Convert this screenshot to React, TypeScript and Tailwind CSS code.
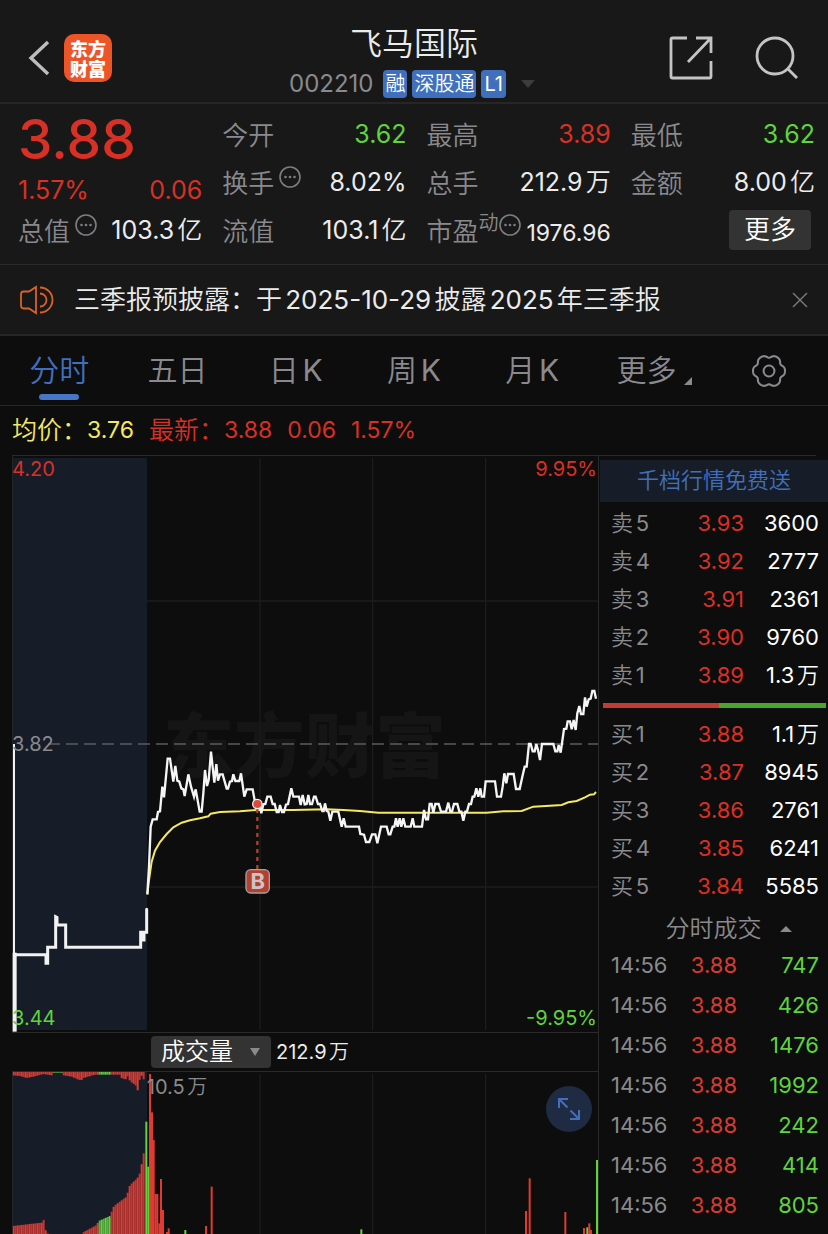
import React from "react"

const sells = [
  { level: "卖5", price: "3.93", volume: "3600" },
  { level: "卖4", price: "3.92", volume: "2777" },
  { level: "卖3", price: "3.91", volume: "2361" },
  { level: "卖2", price: "3.90", volume: "9760" },
  { level: "卖1", price: "3.89", volume: "1.3万" },
]

const buys = [
  { level: "买1", price: "3.88", volume: "1.1万" },
  { level: "买2", price: "3.87", volume: "8945" },
  { level: "买3", price: "3.86", volume: "2761" },
  { level: "买4", price: "3.85", volume: "6241" },
  { level: "买5", price: "3.84", volume: "5585" },
]

const trades = [
  { time: "14:56", price: "3.88", volume: "747" },
  { time: "14:56", price: "3.88", volume: "426" },
  { time: "14:56", price: "3.88", volume: "1476" },
  { time: "14:56", price: "3.88", volume: "1992" },
  { time: "14:56", price: "3.88", volume: "242" },
  { time: "14:56", price: "3.88", volume: "414" },
  { time: "14:56", price: "3.88", volume: "805" },
]

const tabs = ["分时", "五日", "日K", "周K", "月K"]

const pricePoints =
  "442,643 447,560 452,440 458,418 470,418 474,396 480,394 487,320 492,352 503,236 510,236 520,305 526,258 532,302 538,305 544,325 550,328 554,348 565,283 573,320 582,350 587,328 599,395 605,395 610,340 615,270 621,318 626,300 633,215 643,308 649,252 654,302 660,283 668,283 680,326 684,326 690,305 696,303 700,283 706,303 718,303 723,280 733,350 740,328 758,328 766,372 772,372 780,378 784,400 790,373 796,372 802,350 812,350 818,372 824,372 830,396 836,396 840,375 846,396 852,396 858,374 864,372 874,325 880,350 897,350 902,375 908,345 914,373 920,372 925,345 930,372 936,372 942,350 947,350 954,372 960,372 967,393 971,393 975,370 980,393 985,395 991,422 997,395 1015,395 1025,440 1031,415 1037,440 1077,440 1081,462 1092,464 1098,486 1108,486 1116,463 1126,463 1132,490 1143,440 1160,440 1166,463 1171,463 1178,440 1183,440 1188,415 1193,440 1199,415 1204,440 1210,415 1216,440 1232,440 1238,415 1243,440 1266,440 1272,390 1278,418 1284,418 1289,372 1295,372 1300,398 1306,372 1316,372 1323,395 1338,395 1345,368 1351,395 1356,395 1362,372 1372,372 1378,395 1384,395 1390,422 1396,395 1401,395 1407,372 1413,372 1418,350 1423,350 1429,325 1435,350 1441,325 1445,350 1452,350 1457,304 1485,304 1491,350 1503,350 1508,320 1513,280 1519,310 1524,282 1541,282 1548,327 1559,327 1567,290 1574,260 1580,260 1587,192 1592,192 1598,214 1604,214 1609,192 1614,210 1620,240 1626,192 1660,192 1666,214 1672,214 1676,195 1682,218 1692,147 1699,146 1703,124 1710,124 1715,148 1721,120 1727,150 1732,100 1738,78 1743,102 1750,102 1755,52 1760,80 1766,58 1772,56 1777,33 1783,33 1788,56"

const averagePoints =
  "442,643 447,600 455,545 465,512 480,486 500,462 520,442 545,428 570,421 600,415 625,409 632,401 660,396 720,394 772,390 880,390 980,388 1030,390 1080,393 1135,398 1460,398 1510,394 1565,393 1600,380 1650,377 1685,375 1705,367 1730,363 1755,352 1770,344 1782,343 1788,336"

const auctionPoints =
  "45,824 138,824 138,850 143,850 143,802 167,802 167,710 171,712 171,735 197,735 197,802 422,802 422,757 427,757 427,780 432,780 432,757 440,757 440,688"

const RED = "#de3b32"
const GREEN = "#5fd43c"

// outline of the auction volume, [x, y] corners joined by straight lines
const auctionTop = [
  [38, 136], [60, 138], [80, 144], [100, 140], [130, 132], [155, 136], [160, 136], [161, 128], [190, 128],
  [191, 136], [215, 140], [243, 152], [250, 144], [285, 134], [360, 134], [366, 146], [380, 148], [384, 136],
  [390, 154], [405, 164], [410, 170], [415, 188], [420, 140], [428, 136], [433, 156], [438, 136], [444, 136],
]
const auctionBottom = [
  [38, 588], [125, 578], [133, 567], [138, 609], [150, 612], [246, 612], [248, 608], [290, 585], [296, 573],
  [330, 558], [335, 545], [342, 528], [380, 500], [385, 480], [390, 465], [412, 445], [422, 425], [428, 380],
  [434, 360],
]

const tradeBars = [
  [439, 275, GREEN], [445, 410, GREEN], [450, 132, RED], [456, 247, RED], [461, 330, RED], [467, 492, RED],
  [472, 492, RED], [478, 580, RED], [483, 447, RED], [489, 540, RED], [501, 606, RED], [506, 595, RED],
  [556, 600, GREEN], [618, 588, RED], [635, 470, RED], [1084, 598, GREEN], [1578, 543, RED], [1589, 445, RED],
  [1696, 546, RED], [1752, 594, RED], [1762, 592, GREEN], [1768, 580, RED], [1773, 600, RED], [1791, 390, GREEN],
] as [number, number, string][]

const levelAt = (outline: number[][], x: number) => {
  for (let i = 1; i < outline.length; i++) {
    const [x0, y0] = outline[i - 1]
    const [x1, y1] = outline[i]
    if (x <= x1) return y0 + ((y1 - y0) * (x - x0)) / (x1 - x0)
  }
  return outline[outline.length - 1][1]
}

const auctionXs = Array.from({ length: 66 }, (_, i) => 41 + i * 6)
const isFalling = (x: number) => x > 294 && x < 333

// six wide teeth with narrow notches between them
const gearPath =
  Array.from({ length: 72 }, (_, i) => {
    const a = (i * Math.PI) / 36
    const r = 47 - 8 * ((1 - Math.cos(6 * a)) / 2) ** 2
    return `${i ? "L" : "M"}${(50 + r * Math.cos(a)).toFixed(1)} ${(50 + r * Math.sin(a)).toFixed(1)}`
  }).join("") + "Z"

const MoreDots = () => (
  <svg viewBox="0 0 22 22" className="h-[22px] w-[22px] shrink-0" fill="none">
    <circle cx="11" cy="11" r="10" stroke="#7d7d81" strokeWidth="1.6" />
    <circle cx="6.5" cy="11" r="1.3" fill="#7d7d81" />
    <circle cx="11" cy="11" r="1.3" fill="#7d7d81" />
    <circle cx="15.5" cy="11" r="1.3" fill="#7d7d81" />
  </svg>
)

type StatProps = { label: string; value: string; color?: string; dots?: boolean }

const Stat = ({ label, value, color = "text-[#ececec]", dots }: StatProps) => (
  <div className="flex h-12 items-center justify-between">
    <dt className="flex items-center gap-[5px] text-[26px] text-[#8a8a8e]">
      {label}
      {dots && <span className="mb-3"><MoreDots /></span>}
    </dt>
    <dd className={color}>{value}</dd>
  </div>
)

const Header = () => (
  <header className="grid h-[104px] grid-cols-[1fr_auto_1fr] items-center border-b-2 border-[#262626] bg-[#181818] pt-[14px]">
    <div className="flex items-center gap-3 pl-7">
      <button aria-label="返回">
        <svg viewBox="0 0 24 38" className="h-[38px] w-6" fill="none" stroke="#bdbdbd" strokeWidth="3.4">
          <path d="M20 3 L3 19 L20 35" />
        </svg>
      </button>
      <button className="flex h-12 w-12 flex-col items-center justify-center rounded-[10px] bg-[#ed5529] font-['Noto_Sans_CJK_SC',sans-serif] text-[18px] leading-5 font-black text-white">
        <span>东方</span>
        <span>财富</span>
      </button>
    </div>
    <div className="flex flex-col items-center pt-2">
      <h1 className="text-[32px] leading-[44px] text-[#ececec]">飞马国际</h1>
      <div className="flex h-9 items-center gap-[5px] pr-1 text-[20px] leading-7 text-white">
        <span className="mr-[5px] text-[24px] text-[#8a8a8e]">002210</span>
        <span className="rounded bg-[#4070bd] px-[2px]">融</span>
        <span className="rounded bg-[#4070bd] px-[2px]">深股通</span>
        <span className="rounded bg-[#4070bd] px-[3px]">L1</span>
        <button aria-label="切换股票" className="ml-[10px]">
          <svg viewBox="0 0 14 8" className="h-2 w-[14px]"><path d="M0 0H14L7 8Z" fill="#3c3c3c" /></svg>
        </button>
      </div>
    </div>
    <div className="flex items-center justify-end gap-10 pr-7">
      <button aria-label="分享">
        <svg viewBox="0 0 46 46" className="h-[46px] w-[46px]" fill="none" stroke="#c4c4c4" strokeWidth="2.8">
          <path d="M19 3H4.500Q3 3 3 4.500V41.500Q3 43 4.500 43H41.500Q43 43 43 41.500V26" />
          <path d="M28 3H43V18M43 3L20 27" />
        </svg>
      </button>
      <button aria-label="搜索">
        <svg viewBox="0 0 46 46" className="h-[46px] w-[46px]" fill="none" stroke="#c4c4c4" strokeWidth="2.8">
          <circle cx="21" cy="21" r="18" />
          <path d="M34 34L43 43" />
        </svg>
      </button>
    </div>
  </header>
)

const Quote = () => (
  <section className="grid grid-cols-4 gap-5 border-b border-[#2a2a2a] bg-[#181818] pt-[7px] pr-[13px] pb-[9px] pl-[18px] text-[25px] whitespace-nowrap [text-autospace:normal]">
    <div>
      <div className="flex h-24 flex-col justify-between text-[#d93025]">
        <strong className="text-[55px] leading-[56px] font-medium">3.88</strong>
        <div className="flex justify-between leading-[34px]">
          <span>1.57%</span>
          <span>0.06</span>
        </div>
      </div>
      <dl><Stat label="总值" value="103.3亿" dots /></dl>
    </div>
    <dl>
      <Stat label="今开" value="3.62" color="text-[#5fd43c]" />
      <Stat label="换手" value="8.02%" dots />
      <Stat label="流值" value="103.1亿" />
    </dl>
    <dl>
      <Stat label="最高" value="3.89" color="text-[#d93025]" />
      <Stat label="总手" value="212.9万" />
      <div className="flex h-12 items-center justify-between">
        <dt className="flex items-center text-[26px] text-[#8a8a8e]">
          市盈
          <span className="mb-4 text-[20px] leading-6">动</span>
          <span className="mb-3"><MoreDots /></span>
        </dt>
        <dd className="pt-1 text-[23px] text-[#ececec]">1976.96</dd>
      </div>
    </dl>
    <div>
      <dl>
        <Stat label="最低" value="3.62" color="text-[#5fd43c]" />
        <Stat label="金额" value="8.00亿" />
      </dl>
      <div className="flex justify-end pt-[3px] pr-1">
        <button className="h-10 w-[82px] rounded bg-[#333333] text-[26px] leading-10 text-white">更多</button>
      </div>
    </div>
  </section>
)

const Notice = () => (
  <section className="flex h-[71px] items-center border-b-2 border-[#262626] bg-[#181818] pr-5 pl-5">
    <svg viewBox="0 0 34 30" className="h-[30px] w-[34px]" fill="none" stroke="#d9622b" strokeWidth="1.8">
      <path d="M16 2V28L9 23.500H3.500Q1 23.500 1 20.500V9.500Q1 6.500 3.500 6.500H9Z" />
      <path d="M20 8.500A6.500 6.500 0 0 1 20 21.500" />
      <path d="M20 2.500A12.500 12.500 0 0 1 20 27.500" />
    </svg>
    <p className="flex-1 pl-5 text-[26px] whitespace-nowrap text-[#ececec] [text-autospace:normal]">
      三季报预披露：于2025-10-29披露2025年三季报
    </p>
    <button aria-label="关闭">
      <svg viewBox="0 0 16 16" className="h-4 w-4" stroke="#7d7d81" strokeWidth="1.4"><path d="M1 1L15 15M15 1L1 15" /></svg>
    </button>
  </section>
)

const Tabs = () => (
  <nav className="grid h-[70px] grid-cols-7 border-b border-[#262626] text-[30px] text-[#8a8a8e] [text-autospace:normal]">
    {tabs.map((tab, i) => (
      <button key={tab} className={`relative ${i === 0 ? "text-[#4070bd]" : ""}`}>
        {tab}
        {i === 0 && <span className="absolute bottom-[5px] left-1/2 h-[6px] w-10 -translate-x-1/2 rounded-full bg-[#4575c4]" />}
      </button>
    ))}
    <button className="relative pr-2">
      更多
      <svg viewBox="0 0 8 8" className="absolute right-[18px] bottom-5 h-2 w-2"><path d="M8 0V8H0Z" fill="#8a8a8e" /></svg>
    </button>
    <button aria-label="设置" className="flex items-center justify-center">
      <svg viewBox="0 0 100 100" className="h-[34px] w-[34px]" fill="none" stroke="#8a8a8e" strokeWidth="6" strokeLinejoin="round">
        <path d={gearPath} />
        <circle cx="50" cy="50" r="16" />
      </svg>
    </button>
  </nav>
)

const PriceChart = () => (
  <div className="relative border-b border-[#2a2a2a] text-[20px] leading-6">
    <svg viewBox="36 -672 1758 1728" className="block w-full">
      <rect x="36" y="-666" width="405" height="1716" fill="#161d28" />
      <text x="490" y="275" fontSize="212" fontWeight="900" fill="#151515" className="font-['Noto_Sans_CJK_SC',sans-serif]">东方财富</text>
      <path d="M238 -666V1050M780 -666V1050M1118 -666V1050M1457 -666V1050M441 -237H1794M441 621H1794" stroke="#1c1c1c" strokeWidth="4" />
      <path d="M144 192H1794" stroke="#5c5c5e" strokeWidth="5" strokeDasharray="36 18" />
      <path d="M37 -672V1056" stroke="#2a2a2a" strokeWidth="3" />
      <path d="M42 192V824" stroke="#f2f2f2" strokeWidth="6" />
      <path d="M44 818V1055" stroke="#f2f2f2" strokeWidth="12" />
      <polyline points={auctionPoints} fill="none" stroke="#f2f2f2" strokeWidth="9" strokeLinecap="round" />
      <polyline points={averagePoints} fill="none" stroke="#f5e960" strokeWidth="6" />
      <polyline points={pricePoints} fill="none" stroke="#f5f5f5" strokeWidth="7" />
      <path d="M772 387V568" stroke="#a8432f" strokeWidth="7" strokeDasharray="12 12" />
      <circle cx="772" cy="372" r="14" fill="#dd4a3c" stroke="#f2f2f2" strokeWidth="4" />
      <rect x="738" y="569" width="70" height="70" rx="14" fill="#b5402f" stroke="#a3a3a3" strokeWidth="4" />
      <text x="773" y="627" fontSize="66" fontWeight="700" textAnchor="middle" fill="#cbc5c5">B</text>
    </svg>
    <span className="absolute top-[1px] left-0 text-[#d93025]">4.20</span>
    <span className="absolute top-[1px] right-[1px] text-[#d93025]">9.95%</span>
    <span className="absolute top-1/2 left-0 -translate-y-1/2 text-[#8a8a8e]">3.82</span>
    <span className="absolute bottom-[2px] left-0 text-[#5fd43c]">3.44</span>
    <span className="absolute right-[1px] bottom-[2px] text-[#5fd43c]">-9.95%</span>
  </div>
)

const VolumeChart = () => (
  <div className="relative">
    <svg viewBox="36 126 1758 486" className="block w-full">
      <rect x="36" y="126" width="405" height="486" fill="#161d28" />
      <path d="M238 132V612M780 132V612M1118 132V612M1457 132V612" stroke="#1c1c1c" strokeWidth="4" />
      {auctionXs.map((x, i) => (
        <g key={x} fillOpacity={i % 2 ? 0.85 : 1}>
          <rect x={x - 3} y="126" width="6" height={levelAt(auctionTop, x) - 126} fill={isFalling(x) || (x > 160 && x < 191) ? GREEN : RED} />
          <rect x={x - 3} y={levelAt(auctionBottom, x)} width="6" height={612 - levelAt(auctionBottom, x)} fill={isFalling(x) ? GREEN : RED} />
        </g>
      ))}
      {tradeBars.map(([x, y, color]) => (
        <rect key={x} x={x - 3} y={y} width="6" height={612 - y} fill={color} />
      ))}
      <path d="M37 126V612" stroke="#2a2a2a" strokeWidth="3" />
    </svg>
    <span className="absolute top-[3px] left-[23%] text-[20px] leading-6 text-[#8a8a8e] [text-autospace:normal]">10.5万</span>
    <button aria-label="全屏" className="absolute top-[14px] right-[6px] flex h-[46px] w-[46px] items-center justify-center rounded-full bg-[#1e2b42]">
      <svg viewBox="0 0 24 24" className="h-6 w-6" fill="none" stroke="#4070bd" strokeWidth="2">
        <path d="M2 11V2H11M2 2L10.500 10.500M22 13V22H13M22 22L13.500 13.500" />
      </svg>
    </button>
  </div>
)

const OrderTable = ({ rows, label }: { rows: typeof sells; label: string }) => (
  <table aria-label={label} className="w-full table-fixed">
    <tbody>
      {rows.map((row) => (
        <tr key={row.level} className="h-[38px]">
          <td className="w-[64px] pl-3 text-[#8a8a8e]">{row.level}</td>
          <td className="w-[81px] text-right text-[#d93025]">{row.price}</td>
          <td className="pr-[9px] text-right text-white">{row.volume}</td>
        </tr>
      ))}
    </tbody>
  </table>
)

const OrderBook = () => (
  <aside className="w-[229px] shrink-0 text-[22px] leading-7 whitespace-nowrap [text-autospace:normal]">
    <a href="#level2" className="mt-1 ml-[1px] block h-[42px] bg-[#161d28] text-center leading-10 text-[#4070bd]">千档行情免费送</a>
    <div className="pt-[2px]">
      <OrderTable rows={sells} label="卖盘" />
    </div>
    <div className="mt-2 mr-[2px] mb-[7px] ml-1 flex h-[6px] items-center">
      <div className="h-[5px] w-[52%] bg-[#c23c34]" />
      <div className="h-[5px] flex-1 bg-[#4aa52e]" />
    </div>
    <OrderTable rows={buys} label="买盘" />
    <button className="flex h-10 w-full items-center justify-center gap-[18px] pt-2 pl-[30px] text-[24px] text-[#8a8a8e]">
      分时成交
      <svg viewBox="0 0 12 6" className="h-[6px] w-3"><path d="M0 6L6 0L12 6Z" fill="#8a8a8e" /></svg>
    </button>
    <table aria-label="分时成交" className="w-full table-fixed">
      <tbody>
        {trades.map((trade, i) => (
          <tr key={i} className="h-10">
            <td className="w-[74px] pl-3 text-[#8a8a8e]">{trade.time}</td>
            <td className="w-[64px] text-right text-[#d93a30]">{trade.price}</td>
            <td className="pr-[9px] text-right text-[#5fd43c]">{trade.volume}</td>
          </tr>
        ))}
      </tbody>
    </table>
  </aside>
)

export default function App() {
  return (
    <div className="min-h-screen overflow-hidden bg-[#0d0d0d] font-[Inter,'Noto_Sans_CJK_SC_DemiLight','Noto_Sans_CJK_SC',sans-serif]">
      <Header />
      <Quote />
      <Notice />
      <Tabs />
      <div className="mx-3 flex h-[50px] items-center gap-[15px] border-b border-[#2a2a2a] text-[23px] whitespace-nowrap text-[#d93025]">
        <span className="flex items-center text-[#f5e960]"><span className="text-[25px]">均价：</span>3.76</span>
        <span className="flex items-center"><span className="text-[25px]">最新：</span>3.88</span>
        <span>0.06</span>
        <span>1.57%</span>
      </div>
      <main className="flex">
        <div className="min-w-0 flex-1 border-r border-[#2a2a2a] pl-3">
          <PriceChart />
          <div className="flex h-[39px] items-center gap-[5px] border-b border-[#2a2a2a] pl-[139px]">
            <div className="relative">
              <select aria-label="指标" className="h-8 w-[120px] appearance-none rounded bg-[#333333] pl-[10px] text-[24px] leading-8 text-white">
                <option>成交量</option>
                <option>成交额</option>
              </select>
              <svg viewBox="0 0 10 8" className="pointer-events-none absolute top-3 right-[11px] h-2 w-[10px]"><path d="M0 0H10L5 8Z" fill="#8a8a8e" /></svg>
            </div>
            <span className="text-[20px] text-[#ececec] [text-autospace:normal]">212.9万</span>
          </div>
          <VolumeChart />
        </div>
        <OrderBook />
      </main>
    </div>
  )
}
